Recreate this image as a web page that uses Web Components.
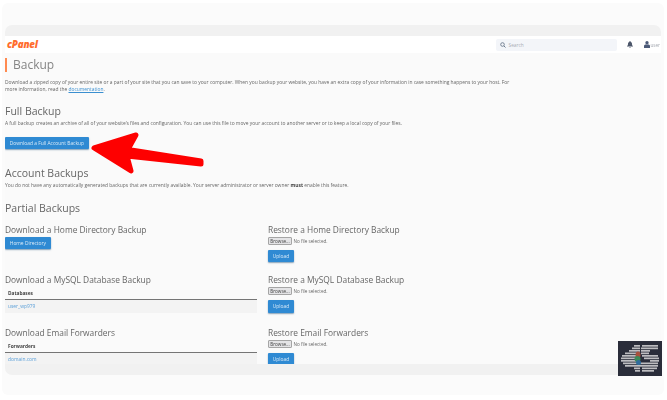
<!DOCTYPE html>
<html lang="en">
<head>
<meta charset="utf-8">
<title>Backup</title>
<style>
  html, body { margin: 0; padding: 0; background: #fff; }
  body { width: 667px; height: 400px; overflow: hidden; font-family: "Open Sans", sans-serif; }
</style>
</head>
<body>
<cp-shot>
  <cp-header></cp-header>
  <cp-title>Backup</cp-title>
  <cp-text top="7">Download a zipped copy of your entire site or a part of your site that you can save to your computer. When you backup your website, you have an extra copy of your information in case something happens to your host. For more information, read the <cp-link>documentation</cp-link>.</cp-text>
  <cp-heading top="13">Full Backup</cp-heading>
  <cp-text top="2">A full backup creates an archive of all of your website’s files and configuration. You can use this file to move your account to another server or to keep a local copy of your files.</cp-text>
  <cp-button top="10">Download a Full Account Backup</cp-button>
  <cp-heading top="18">Account Backups</cp-heading>
  <cp-text top="2">You do not have any automatically generated backups that are currently available. Your server administrator or server owner <b>must</b> enable this feature.</cp-text>
  <cp-heading top="13">Partial Backups</cp-heading>
  <cp-columns>
    <cp-block heading="Download a Home Directory Backup"><cp-button>Home Directory</cp-button></cp-block>
    <cp-block heading="Restore a Home Directory Backup"><cp-restore></cp-restore></cp-block>
    <cp-block heading="Download a MySQL Database Backup"><cp-table label="Databases" value="user_wp979"></cp-table></cp-block>
    <cp-block heading="Restore a MySQL Database Backup"><cp-restore></cp-restore></cp-block>
    <cp-block heading="Download Email Forwarders"><cp-table label="Forwarders" value="domain.com"></cp-table></cp-block>
    <cp-block heading="Restore Email Forwarders"><cp-restore></cp-restore></cp-block>
  </cp-columns>
</cp-shot>

<script>
class CpShot extends HTMLElement {
  constructor() {
    super();
    const rows = [
      [4, 16, 22], [4, 24, 40], [6.5, 14, 22], [6.5, 23, 40], [9, 11, 22], [9, 23, 32],
      [11.5, 7, 22], [11.5, 23, 31], [14, 4, 20], [14, 24, 40], [16.5, 3, 18], [16.5, 26, 41],
      [19, 3, 20], [19, 32, 41], [21.5, 5, 40], [24, 7, 40], [26.5, 16, 22], [26.5, 24, 39],
      [29, 17, 22], [29, 24, 36]
    ];
    const stripes = rows.map(r => `<rect x="${r[1]}" y="${r[0]}" width="${r[2] - r[1]}" height="1.700"/>`).join('');
    this.attachShadow({mode: 'open'}).innerHTML = `
      <style>
        :host { display: block; width: 667px; height: 400px; position: relative; }
        .frame { position: absolute; left: 2px; top: 3px; width: 662px; height: 392px; background: #fbfbfb; border-radius: 6px; }
        .win { position: absolute; left: 5px; top: 25px; width: 656px; height: 350px; display: flex; flex-direction: column;
               background: #f1f1f1; border-radius: 7px; overflow: hidden; filter: blur(.5px); }
        .bar { flex: 0 0 11px; }
        .page { flex: 1; min-height: 0; background: #fafafa; overflow: hidden; display: flex; flex-direction: column; }
        .arrow { position: absolute; left: 0; top: 0; filter: blur(.3px); }
        .logo { position: absolute; left: 618px; top: 341px; filter: blur(.35px); }
      </style>
      <div class="frame"></div>
      <div class="win">
        <div class="bar"></div>
        <div class="page"><slot></slot></div>
        <div class="bar"></div>
      </div>
      <svg class="arrow" width="667" height="400" viewBox="0 0 667 400">
        <path d="M94 148 L136 135 L128 149.500 L201 161 L201 164 L127 156 L131 171 Z" fill="#fe0000" stroke="#fe0000" stroke-width="5" stroke-linejoin="round"/>
      </svg>
      <svg class="logo" width="44" height="35" viewBox="0 0 44 35">
        <rect width="44" height="35" fill="#2a2d3a"/>
        <g fill="#bdbdc0">${stripes}</g>
        <ellipse cx="20" cy="14" rx="2.500" ry="3.500" fill="#a8503c"/>
        <ellipse cx="19.500" cy="18" rx="3" ry="3" fill="#3c8a5a"/>
        <ellipse cx="20.500" cy="21.500" rx="2.500" ry="2.500" fill="#2f6c9c"/>
      </svg>
    `;
  }
}

class CpHeader extends HTMLElement {
  constructor() {
    super();
    this.attachShadow({mode: 'open'}).innerHTML = `
      <style>
        :host { display: flex; flex: 0 0 17px; align-items: center; background: #fff; padding: 0 0 0 2px; }
        .brand { font: italic 800 9.800px "Open Sans", sans-serif; color: #ff6c2c; letter-spacing: -.2px; }
        .search { margin-left: auto; width: 121px; height: 12px; box-sizing: border-box; background: #f3f5f9; border-radius: 2px;
                  display: flex; align-items: center; gap: 3px; padding-left: 4px; font-size: 4.800px; color: #a9adb5; }
        .bell { margin-left: 10px; }
        .user { margin-left: 11px; margin-right: -4px; display: flex; align-items: center; gap: 1px; font-size: 4.600px; color: #a3a7af; }
      </style>
      <span class="brand">cPanel</span>
      <div class="search">
        <svg width="6" height="6" viewBox="0 0 12 12"><circle cx="5" cy="5" r="3.600" fill="none" stroke="#6c7a8c" stroke-width="1.800"/><path d="M8 8l3 3" stroke="#6c7a8c" stroke-width="2"/></svg>
        <span>Search</span>
      </div>
      <svg class="bell" width="6" height="7" viewBox="0 0 12 14"><path d="M6 0a1 1 0 0 1 1 1.300C9.500 2 10 4 10 6c0 2.500 1 3.500 2 4.500V11H0v-.5C1 9.500 2 8.500 2 6c0-2 .5-4 3-4.700A1 1 0 0 1 6 0zM4.500 12h3a1.500 1.500 0 0 1-3 0z" fill="#4c566a"/></svg>
      <div class="user">
        <svg width="6" height="7" viewBox="0 0 12 14"><circle cx="6" cy="3.500" r="3.300" fill="#4c5a78"/><path d="M0 14V10c0-2 2-3 3-3h6c1 0 3 1 3 3v4z" fill="#4c5a78"/></svg>
        <span>user</span><span style="margin-left:2px;font-size:3.500px">▾</span>
      </div>
    `;
  }
}

class CpTitle extends HTMLElement {
  constructor() {
    super();
    this.attachShadow({mode: 'open'}).innerHTML = `
      <style>
        :host { display: block; margin: 5px 0 0 0; border-left: 2px solid #ff8a50; padding-left: 6px; height: 14px;
                font-size: 12px; line-height: 14px; color: #858585; }
      </style>
      <slot></slot>
    `;
  }
}

class CpText extends HTMLElement {
  constructor() {
    super();
    this.attachShadow({mode: 'open'}).innerHTML = `
      <style>
        :host { display: block; font-size: 4.900px; line-height: 6.500px; color: #666; width: 510px; }
        ::slotted(b) { color: #444; }
      </style>
      <slot></slot>
    `;
    this.style.marginTop = (this.getAttribute('top') || 0) + 'px';
  }
}

class CpLink extends HTMLElement {
  constructor() {
    super();
    // no whitespace around the slot, it sits inline in a sentence
    this.attachShadow({mode: 'open'}).innerHTML = `<style>:host { color: #3a8fd0; text-decoration: underline; }</style><slot></slot>`;
  }
}

class CpHeading extends HTMLElement {
  constructor() {
    super();
    this.attachShadow({mode: 'open'}).innerHTML = `
      <style>
        :host { display: block; color: #666; font-size: 10.500px; line-height: 13px; }
      </style>
      <slot></slot>
    `;
    this.style.marginTop = (this.getAttribute('top') || 0) + 'px';
  }
}

class CpButton extends HTMLElement {
  constructor() {
    super();
    this.attachShadow({mode: 'open'}).innerHTML = `
      <style>
        :host { display: table; align-self: flex-start; background: #2f8ad3; color: #dcebf7; font-size: 4.900px; line-height: 6px; padding: 3.250px 4.800px;
                border-radius: 1px; box-shadow: 0 1px 1.500px rgba(40,90,130,.55); }
      </style>
      <slot></slot>
    `;
    if (this.hasAttribute('top')) this.style.marginTop = this.getAttribute('top') + 'px';
  }
}

class CpColumns extends HTMLElement {
  constructor() {
    super();
    this.attachShadow({mode: 'open'}).innerHTML = `
      <style>
        :host { display: grid; grid-template-columns: 252px 252px; column-gap: 11px; grid-auto-rows: 50.500px; margin-top: 9px; }
        ::slotted(:nth-child(n+5)) { margin-top: 2px; }
      </style>
      <slot></slot>
    `;
  }
}

class CpBlock extends HTMLElement {
  constructor() {
    super();
    this.attachShadow({mode: 'open'}).innerHTML = `
      <style>
        :host { display: block; }
        .h { color: #666; font-size: 8.400px; line-height: 11px; margin-bottom: 2px; }
      </style>
      <div class="h">${this.getAttribute('heading')}</div>
      <slot></slot>
    `;
  }
}

class CpRestore extends HTMLElement {
  constructor() {
    super();
    this.attachShadow({mode: 'open'}).innerHTML = `
      <style>
        :host { display: block; }
        .file { display: flex; align-items: center; gap: 1.500px; font-size: 4.600px; color: #666; }
        .browse { width: 24px; height: 8px; box-sizing: border-box; background: #e4e4e6; border: .5px solid #a5a5a5; border-radius: 1px;
                  text-align: center; line-height: 7px; color: #444; }
        cp-button { margin-top: 5px; }
      </style>
      <div class="file"><span class="browse">Browse...</span><span>No file selected.</span></div>
      <cp-button>Upload</cp-button>
    `;
  }
}

class CpTable extends HTMLElement {
  constructor() {
    super();
    this.attachShadow({mode: 'open'}).innerHTML = `
      <style>
        :host { display: block; }
        .th { padding: 3px 3px 0; height: 13px; box-sizing: border-box; font-size: 4.800px; font-weight: 700; line-height: 7px; color: #444; border-bottom: 1px solid #757575; }
        .td { padding: 0 3px; height: 13px; background: #f3f3f3; font-size: 4.900px; line-height: 13px; color: #5a9fd8; }
      </style>
      <div class="th">${this.getAttribute('label')}</div>
      <div class="td">${this.getAttribute('value')}</div>
    `;
  }
}

customElements.define('cp-link', CpLink);
customElements.define('cp-button', CpButton);
customElements.define('cp-shot', CpShot);
customElements.define('cp-header', CpHeader);
customElements.define('cp-title', CpTitle);
customElements.define('cp-text', CpText);
customElements.define('cp-heading', CpHeading);
customElements.define('cp-columns', CpColumns);
customElements.define('cp-block', CpBlock);
customElements.define('cp-restore', CpRestore);
customElements.define('cp-table', CpTable);
</script>
</body>
</html>
